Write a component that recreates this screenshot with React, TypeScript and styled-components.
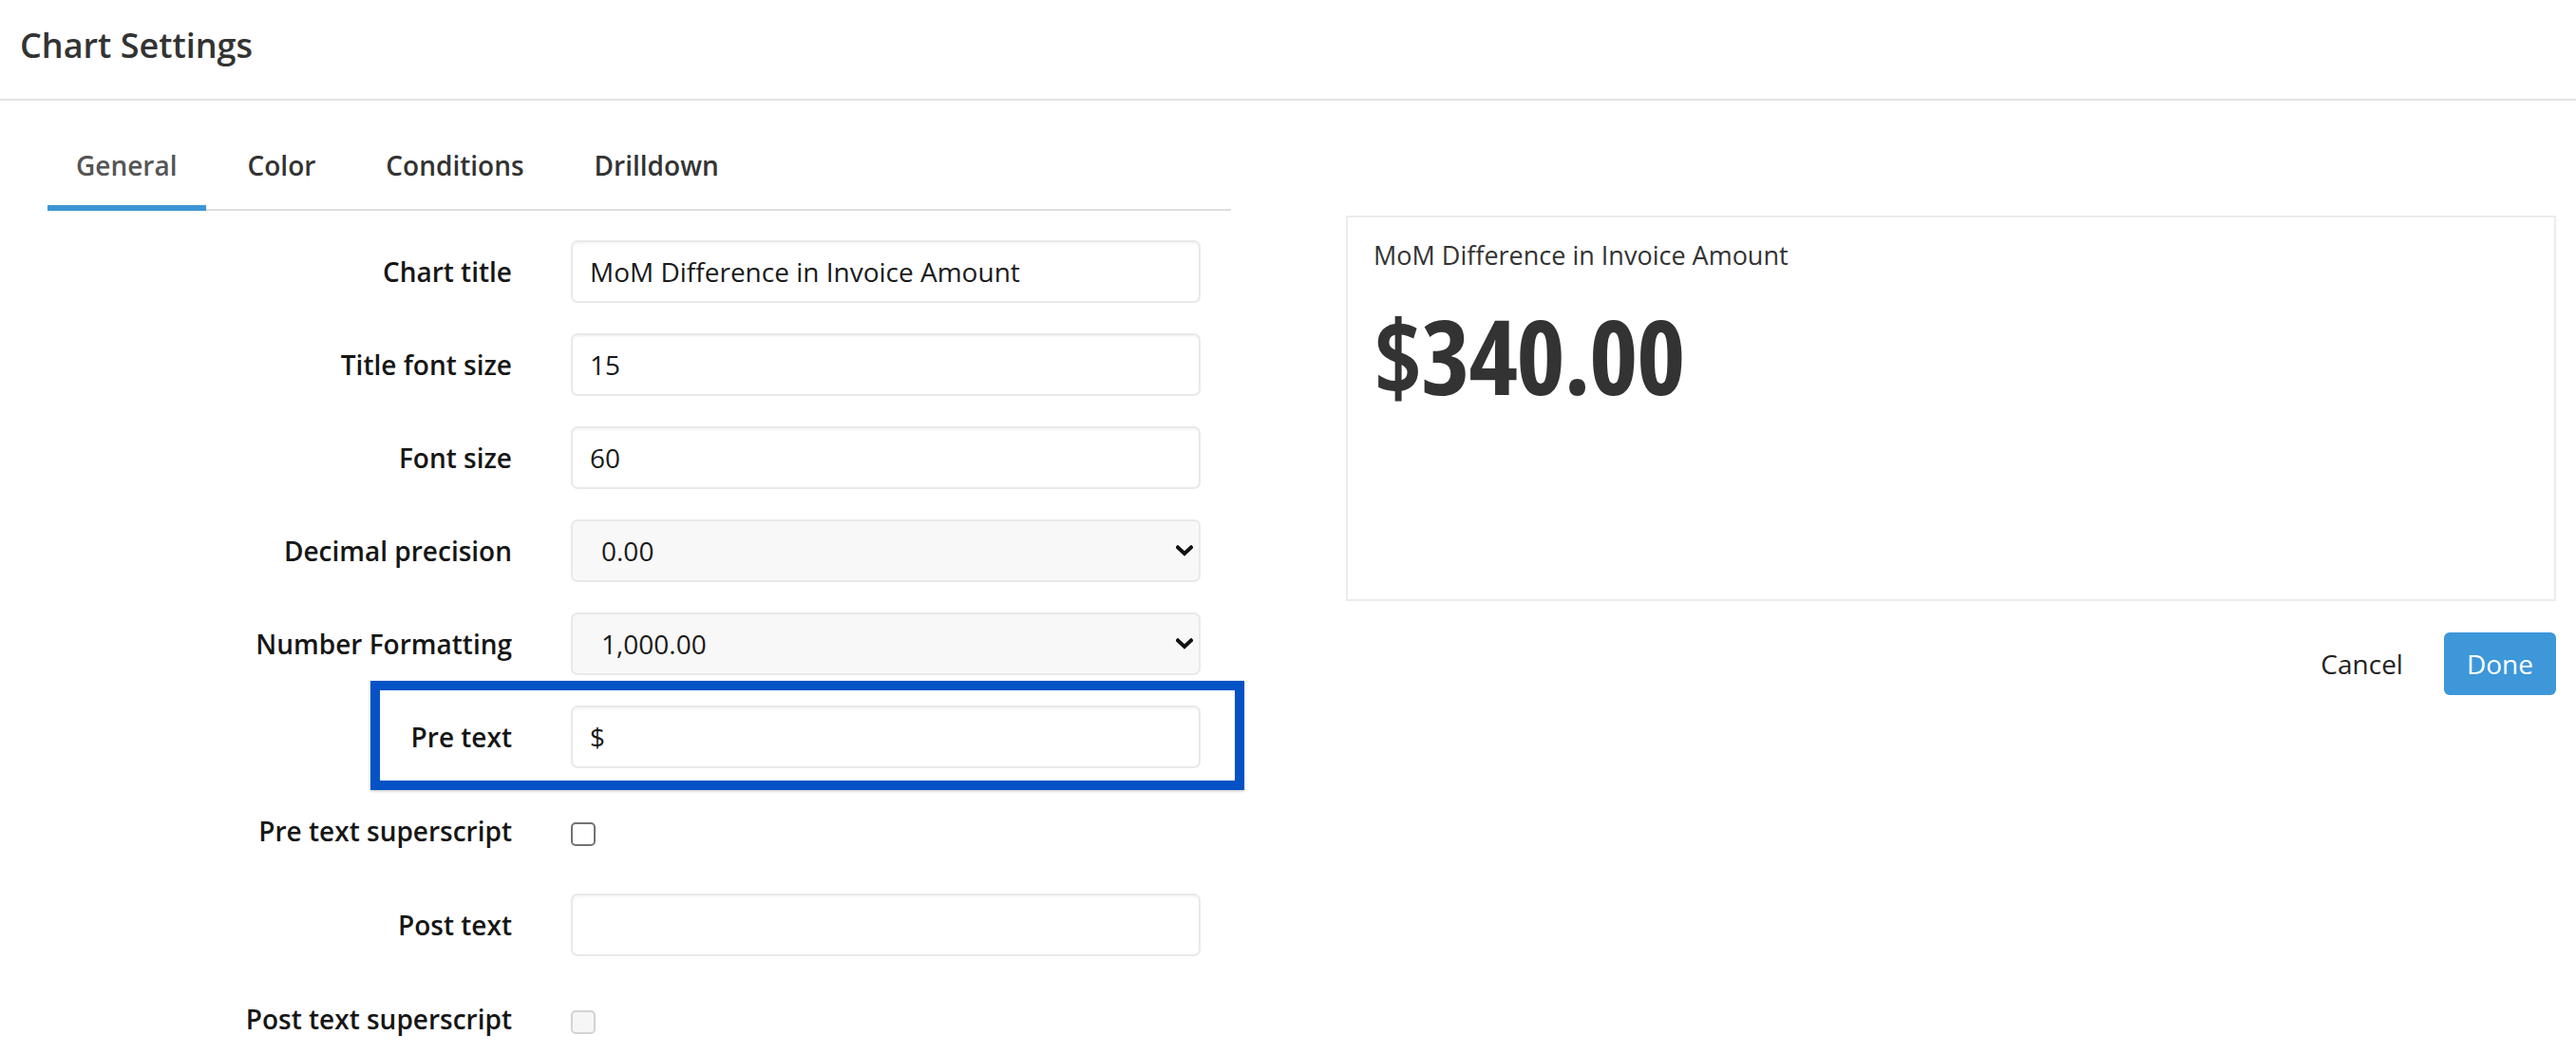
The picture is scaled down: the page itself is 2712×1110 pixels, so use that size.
import React from "react";
import styled, { createGlobalStyle } from "styled-components";

const GlobalStyle = createGlobalStyle`
  html, body { margin: 0; padding: 0; background: #fff; }
  body { font-family: "Open Sans", "Noto Sans", "Liberation Sans", sans-serif; color: #222; }
  * { box-sizing: border-box; }
`;

const Page = styled.div`
  width: 2712px;
  min-height: 1110px;
  background: #fff;
`;

const Header = styled.header`
  padding: 24px 21px 32px;
  border-bottom: 2px solid #e4e4e4;
`;

const Title = styled.h1`
  margin: 0;
  font-size: 36px;
  line-height: 48px;
  font-weight: 600;
  color: #333;
`;

const Body = styled.div`
  display: flex;
  align-items: flex-start;
  padding: 0 21px 0 50px;
`;

const LeftColumn = styled.section`
  width: 1246px;
  flex: none;
`;

const RightColumn = styled.section`
  flex: 1;
  margin-left: 121px;
  padding-top: 121px;
  display: flex;
  flex-direction: column;
`;

const TabList = styled.nav`
  display: flex;
  gap: 14px;
  margin-top: 26px;
  border-bottom: 2px solid #dddddd;
`;

const Tab = styled.div<{ $active?: boolean }>`
  padding: 22px 30px 22px;
  margin-bottom: -2px;
  font-size: 28px;
  line-height: 40px;
  font-weight: 600;
  color: ${(p) => (p.$active ? "#555" : "#333")};
  border-bottom: 6px solid ${(p) => (p.$active ? "#3d95d6" : "transparent")};
`;

const Form = styled.div`
  display: flex;
  flex-direction: column;
  gap: 32px;
  margin-top: 31px;
  padding-bottom: 40px;
`;

const Row = styled.div<{ $tall?: boolean }>`
  position: relative;
  display: grid;
  grid-template-columns: 489px 663px;
  column-gap: 62px;
  align-items: center;
  min-height: ${(p) => (p.$tall ? "68px" : "66px")};
`;

const Label = styled.label`
  text-align: right;
  font-size: 28px;
  font-weight: 600;
  color: #161616;
  line-height: 40px;
`;

const TextInput = styled.input`
  height: 66px;
  width: 100%;
  border: 2px solid #e9e9e9;
  border-radius: 7px;
  box-shadow: inset 0 2px 2px rgba(0, 0, 0, 0.04);
  padding: 0 18px;
  font-family: "Open Sans", "Noto Sans", sans-serif;
  font-size: 28px;
  color: #1a1a1a;
  background: #fff;
  outline: none;
`;

const SelectWrap = styled.div`
  position: relative;
  width: 100%;
`;

const Select = styled.select`
  appearance: none;
  -webkit-appearance: none;
  height: 66px;
  width: 100%;
  border: 2px solid #e9e9e9;
  border-radius: 7px;
  padding: 0 60px 0 30px;
  font-family: "Open Sans", "Noto Sans", sans-serif;
  font-size: 28px;
  color: #1a1a1a;
  background: #f8f8f8;
  outline: none;
`;

const Chevron = styled.svg`
  position: absolute;
  right: 8px;
  top: 50%;
  transform: translateY(-50%);
  width: 18px;
  height: 12px;
  pointer-events: none;
`;

const Checkbox = styled.input<{ $disabledLook?: boolean }>`
  appearance: none;
  -webkit-appearance: none;
  margin: 6px 0 0 0;
  width: 26px;
  height: 25px;
  border-radius: 5px;
  border: 2px solid ${(p) => (p.$disabledLook ? "#d3d3d3" : "#727272")};
  background: ${(p) => (p.$disabledLook ? "#f6f6f6" : "#fff")};
`;

const Highlight = styled.div`
  position: absolute;
  left: 340px;
  top: -26px;
  width: 920px;
  height: 115px;
  border: 10px solid #0452c6;
  box-shadow: 0 1px 3px rgba(0, 0, 0, 0.25);
  pointer-events: none;
`;

const PreviewCard = styled.div`
  height: 406px;
  border: 2px solid #ececec;
  padding: 22px 27px;
`;

const PreviewTitle = styled.div`
  font-size: 27px;
  line-height: 36px;
  color: #333;
`;

const PreviewValue = styled.div`
  margin-top: 21px;
  font-family: "Open Sans", "Noto Sans", sans-serif;
  font-size: 110px;
  line-height: 130px;
  font-weight: 700;
  font-stretch: 75%;
  color: #333;
  letter-spacing: -1.5px;
`;

const Actions = styled.div`
  display: flex;
  justify-content: flex-end;
  align-items: center;
  gap: 13px;
  margin-top: 33px;
`;

const Button = styled.button<{ $primary?: boolean }>`
  height: 66px;
  padding: 0 ${(p) => (p.$primary ? "24px" : "30px")};
  border: none;
  border-radius: 6px;
  font-family: "Open Sans", "Noto Sans", sans-serif;
  font-size: 28px;
  color: ${(p) => (p.$primary ? "#fff" : "#222")};
  background: ${(p) => (p.$primary ? "#3d97d9" : "transparent")};
`;

const ChevronIcon = () => (
  <Chevron viewBox="0 0 18 12">
    <path d="M2 2.5 L9 9 L16 2.5" fill="none" stroke="#111" strokeWidth="4" strokeLinecap="square" />
  </Chevron>
);

export default function App() {
  return (
    <Page>
      <GlobalStyle />
      <Header>
        <Title>Chart Settings</Title>
      </Header>
      <Body>
        <LeftColumn>
          <TabList>
            <Tab $active>General</Tab>
            <Tab>Color</Tab>
            <Tab>Conditions</Tab>
            <Tab>Drilldown</Tab>
          </TabList>
          <Form>
            <Row>
              <Label>Chart title</Label>
              <TextInput defaultValue="MoM Difference in Invoice Amount" />
            </Row>
            <Row>
              <Label>Title font size</Label>
              <TextInput defaultValue="15" />
            </Row>
            <Row>
              <Label>Font size</Label>
              <TextInput defaultValue="60" />
            </Row>
            <Row>
              <Label>Decimal precision</Label>
              <SelectWrap>
                <Select defaultValue="0.00">
                  <option>0</option>
                  <option>0.0</option>
                  <option>0.00</option>
                </Select>
                <ChevronIcon />
              </SelectWrap>
            </Row>
            <Row>
              <Label>Number Formatting</Label>
              <SelectWrap>
                <Select defaultValue="1,000.00">
                  <option>1,000.00</option>
                  <option>1.000,00</option>
                </Select>
                <ChevronIcon />
              </SelectWrap>
            </Row>
            <Row>
              <Label>Pre text</Label>
              <TextInput defaultValue="$" />
              <Highlight />
            </Row>
            <Row $tall>
              <Label>Pre text superscript</Label>
              <Checkbox type="checkbox" />
            </Row>
            <Row>
              <Label>Post text</Label>
              <TextInput defaultValue="" />
            </Row>
            <Row $tall>
              <Label>Post text superscript</Label>
              <Checkbox type="checkbox" $disabledLook />
            </Row>
          </Form>
        </LeftColumn>
        <RightColumn>
          <PreviewCard>
            <PreviewTitle>MoM Difference in Invoice Amount</PreviewTitle>
            <PreviewValue>$340.00</PreviewValue>
          </PreviewCard>
          <Actions>
            <Button>Cancel</Button>
            <Button $primary>Done</Button>
          </Actions>
        </RightColumn>
      </Body>
    </Page>
  );
}
